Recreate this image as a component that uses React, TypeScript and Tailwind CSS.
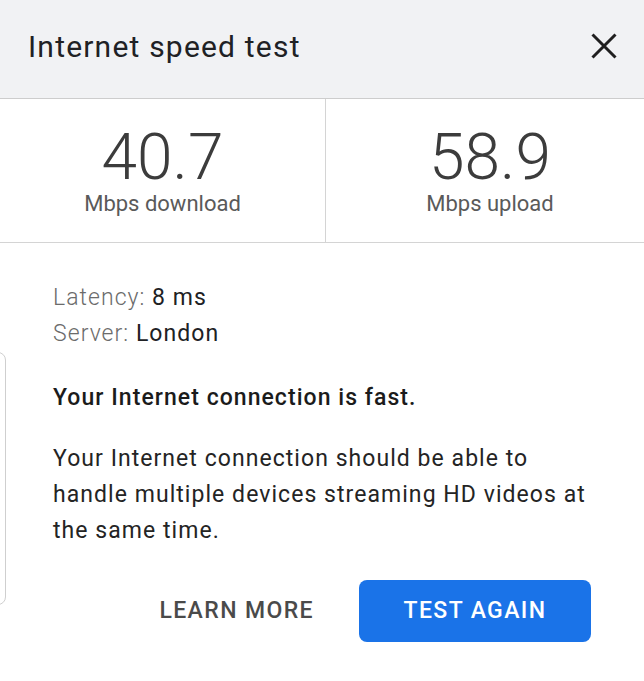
export default function App() {
  return (
    <div
      className="relative w-[644px] h-[681px] bg-white overflow-hidden text-[#202124]"
      style={{ fontFamily: "Roboto, 'Noto Sans', Arial, sans-serif" }}
    >
      {/* Card peeking from behind on the left */}
      <div className="absolute left-[-20px] top-[352px] w-[26px] h-[253px] border border-[#cfcfcf] rounded-lg" />

      {/* Header */}
      <div className="flex items-center justify-between h-[99px] pb-1 pl-7 pr-[27px] bg-[#f1f2f4] border-b border-[#cdcdcd]">
        <h1 className="text-[30px] leading-9 font-normal tracking-[1.2px] text-[#202124]">Internet speed test</h1>
        <svg width="26" height="26" viewBox="0 0 26 26" className="mt-[-2px]">
          <path d="M1.5 1.5 L24.5 24.5 M24.5 1.5 L1.5 24.5" stroke="#1f1f1f" strokeWidth="3" />
        </svg>
      </div>

      {/* Speeds */}
      <div className="grid grid-cols-[326px_328px] border-b border-[#d4d4d4]">
        <div className="flex flex-col items-center pt-[31px] pb-[24px] border-r border-[#d4d4d4]">
          <span className="text-[64px] leading-[56px] font-light text-[#3c3c3c]">40.7</span>
          <span className="mt-1 text-[22px] leading-7 text-[#5a5a5a]">Mbps download</span>
        </div>
        <div className="flex flex-col items-center pt-[31px] pb-[24px]">
          <span className="text-[64px] leading-[56px] font-light text-[#3c3c3c]">58.9</span>
          <span className="mt-1 text-[22px] leading-7 text-[#5a5a5a]">Mbps upload</span>
        </div>
      </div>

      {/* Details */}
      <div className="pl-[53px] pr-[53px] pt-[37px] tracking-[1.05px]">
        <div className="text-[23px] leading-9">
          <p>
            <span className="font-light text-[#6b6b6b]">Latency: </span>
            <span className="text-[#202124]">8 ms</span>
          </p>
          <p>
            <span className="font-light text-[#6b6b6b]">Server: </span>
            <span className="text-[#202124]">London</span>
          </p>
        </div>

        <p className="mt-[28px] text-[23px] leading-9 font-medium text-[#1b1b1b]">
          Your Internet connection is fast.
        </p>

        <p className="mt-[25px] text-[23px] leading-9 text-[#242424] whitespace-nowrap">
          Your Internet connection should be able to
          <br />
          handle multiple devices streaming HD videos at
          <br />
          the same time.
        </p>

        <div className="flex items-center justify-end mt-[31px] tracking-[1.4px]">
          <button className="text-[23px] font-medium text-[#4a4a4a] mr-[45px]">LEARN MORE</button>
          <button className="w-[232px] h-[62px] rounded-lg bg-[#1a73e8] text-white text-[23px] font-medium">
            TEST AGAIN
          </button>
        </div>
      </div>
    </div>
  );
}
